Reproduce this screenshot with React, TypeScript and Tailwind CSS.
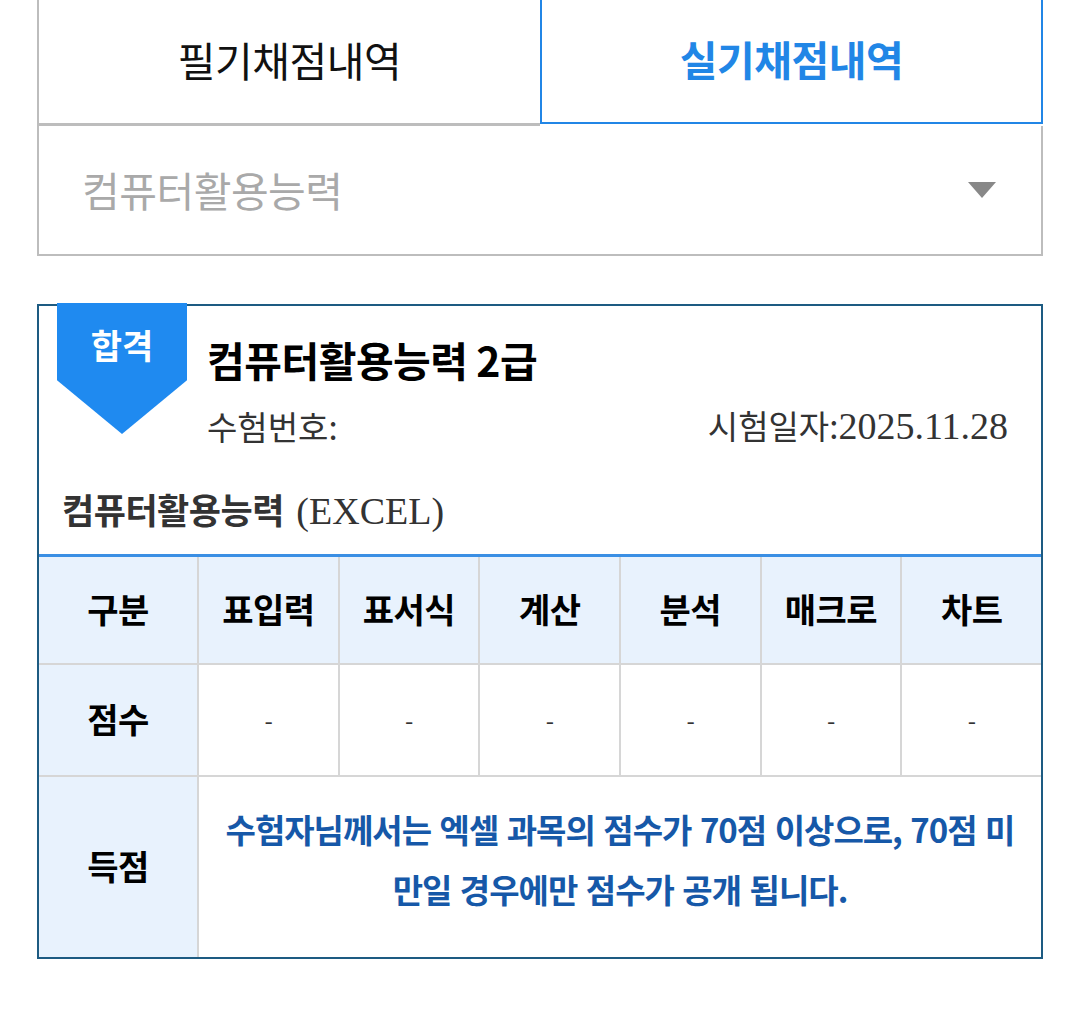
import React from "react";

const heads = ["표입력", "표서식", "계산", "분석", "매크로", "차트"];

export default function App() {
  return (
    <div className="min-h-[1025px] bg-white font-['Noto_Sans_CJK_KR','Noto_Sans',sans-serif] text-[#111]">
      <div className="mx-[37px] w-[1006px]">
        {/* tabs */}
        <div className="flex items-start">
          <button className="flex h-[126px] w-[503px] items-center justify-center border-b-[3px] border-l-2 border-[#bdbdbd] pb-1 text-[41px] tracking-[-0.5px] text-[#111]">
            필기채점내역
          </button>
          <button className="flex h-[124px] w-[503px] items-center justify-center border-x-2 border-b-2 border-[#2186e6] pb-1 text-[41px] font-bold tracking-[-0.5px] text-[#2186e6]">
            실기채점내역
          </button>
        </div>

        {/* select */}
        <div className="flex h-[130px] items-center justify-between border-x-2 border-b-2 border-[#bdbdbd] pl-[43px] pr-[45px]">
          <span className="text-[41px] tracking-[-0.5px] text-[#a9a9a9]">컴퓨터활용능력</span>
          <svg width="28" height="16" viewBox="0 0 28 16">
            <polygon points="0,0 28,0 14,16" fill="#888" />
          </svg>
        </div>

        {/* result card */}
        <div className="relative mt-[48px] border-2 border-[#1d5b82]">
          <div className="absolute -top-[3px] left-[18px] flex h-[131px] w-[130px] justify-center bg-[#1f8af0] pt-[20px] [clip-path:polygon(0_0,100%_0,100%_59%,50%_100%,0_59%)]">
            <span className="text-[34px] font-bold leading-[44px] text-white">합격</span>
          </div>

          <div className="pl-[168px] pr-[33px] pt-[28px]">
            <div className="text-[41px] font-bold leading-[50px] tracking-[-0.5px] text-black">
              컴퓨터활용능력 2급
            </div>
            <div className="mt-[20px] flex items-center justify-between text-[33px] leading-[42px] text-[#333]">
              <span>수험번호:</span>
              <span>
                시험일자:
                <span className="font-['Liberation_Serif',serif] text-[38px]">2025.11.28</span>
              </span>
            </div>
          </div>

          <div className="mt-[41px] px-[23px] text-[35px] font-bold leading-[42px] tracking-[-0.5px] text-[#333]">
            컴퓨터활용능력{" "}
            <span className="ml-[5px] font-['Liberation_Serif',serif] text-[38px] font-normal tracking-normal">(EXCEL)</span>
          </div>

          {/* score table */}
          <div className="mt-[22px] grid grid-cols-[158px_repeat(6,1fr)] gap-[2px] border-t-[3px] border-[#3a8fe4] bg-[#d6d6d6] text-[34px] font-bold tracking-[-0.5px] text-black">
            <div className="flex h-[106px] items-center justify-center bg-[#e8f2fd] pb-[4px]">구분</div>
            {heads.map((h) => (
              <div key={h} className="flex h-[106px] items-center justify-center bg-[#e8f2fd] pb-[4px]">
                {h}
              </div>
            ))}

            <div className="flex h-[110px] items-center justify-center bg-[#e8f2fd] pb-[4px]">점수</div>
            {heads.map((h) => (
              <div key={h} className="flex h-[110px] items-center justify-center bg-white text-[24px] font-normal text-[#333]">
                -
              </div>
            ))}

            <div className="flex h-[180px] items-center justify-center bg-[#e8f2fd] pb-[4px]">득점</div>
            <div className="col-span-6 flex h-[180px] items-center justify-center bg-white pb-[16px] text-center text-[33px] leading-[60px] tracking-[-1px] [word-spacing:2px] text-[#1658a8]">
              <p>
                수험자님께서는 엑셀 과목의 점수가 70점 이상으로, 70점 미<br />
                만일 경우에만 점수가 공개 됩니다.
              </p>
            </div>
          </div>
        </div>
      </div>
    </div>
  );
}
